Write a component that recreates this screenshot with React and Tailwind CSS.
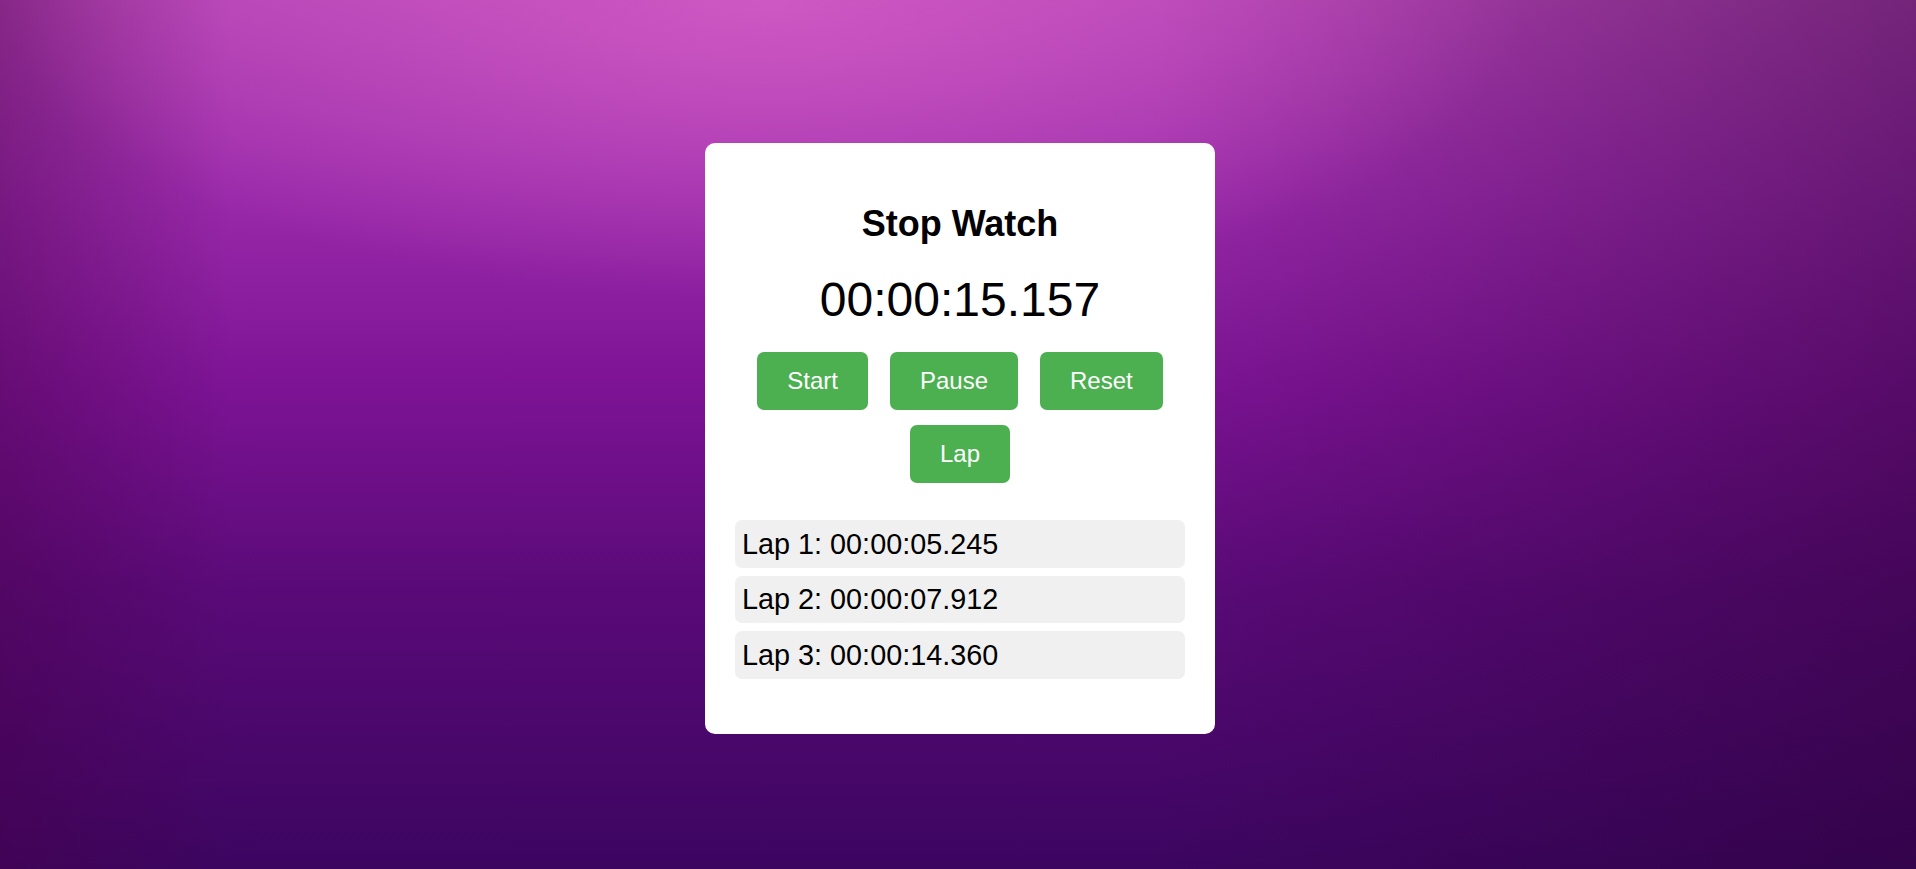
import { useState } from 'react'

const laps = ['00:00:05.245', '00:00:07.912', '00:00:14.360']

export default function App() {
  const [time] = useState('00:00:15.157')

  return (
    <div
      className="min-h-screen w-full flex items-center justify-center pt-[8px] pl-[4px] bg-[#6a0f84] bg-[image:radial-gradient(ellipse_760px_300px_at_40%_0%,rgba(215,95,200,0.75)_0%,rgba(200,80,200,0)_100%),linear-gradient(90deg,rgba(70,0,70,0.4)_0%,rgba(70,0,70,0)_12%,rgba(0,0,0,0)_60%,rgba(40,0,50,0.45)_100%),linear-gradient(180deg,#b242b4_0%,#9a2aaa_22%,#7c1394_45%,#5a0a78_68%,#3c0560_100%)]"
      style={{ fontFamily: '"Liberation Sans", Arial, sans-serif' }}
    >
      <div className="w-[510px] bg-white rounded-[10px] px-[30px] pt-[30px] pb-[55px] flex flex-col items-center text-black">
        <h2 className="mt-[30px] text-[36px] leading-[41px] font-bold">Stop Watch</h2>
        <div className="mt-[28px] text-[48px] leading-[55px]">{time}</div>

        <div className="mt-[25px] w-full flex flex-wrap justify-center gap-x-[22px] gap-y-[15px]">
          {['Start', 'Pause', 'Reset', 'Lap'].map(label => (
            <button
              key={label}
              className="px-[30px] py-[15px] text-[24px] leading-[28px] text-white bg-[#4caf50] rounded-[7px]"
            >
              {label}
            </button>
          ))}
        </div>

        <ul className="mt-[37px] w-full flex flex-col gap-[8px]">
          {laps.map((lap, i) => (
            <li key={i} className="bg-[#f0f0f0] rounded-[7px] pl-[7px] py-[7.5px] text-[28.8px] leading-[32.5px]">
              Lap {i + 1}: {lap}
            </li>
          ))}
        </ul>
      </div>
    </div>
  )
}
